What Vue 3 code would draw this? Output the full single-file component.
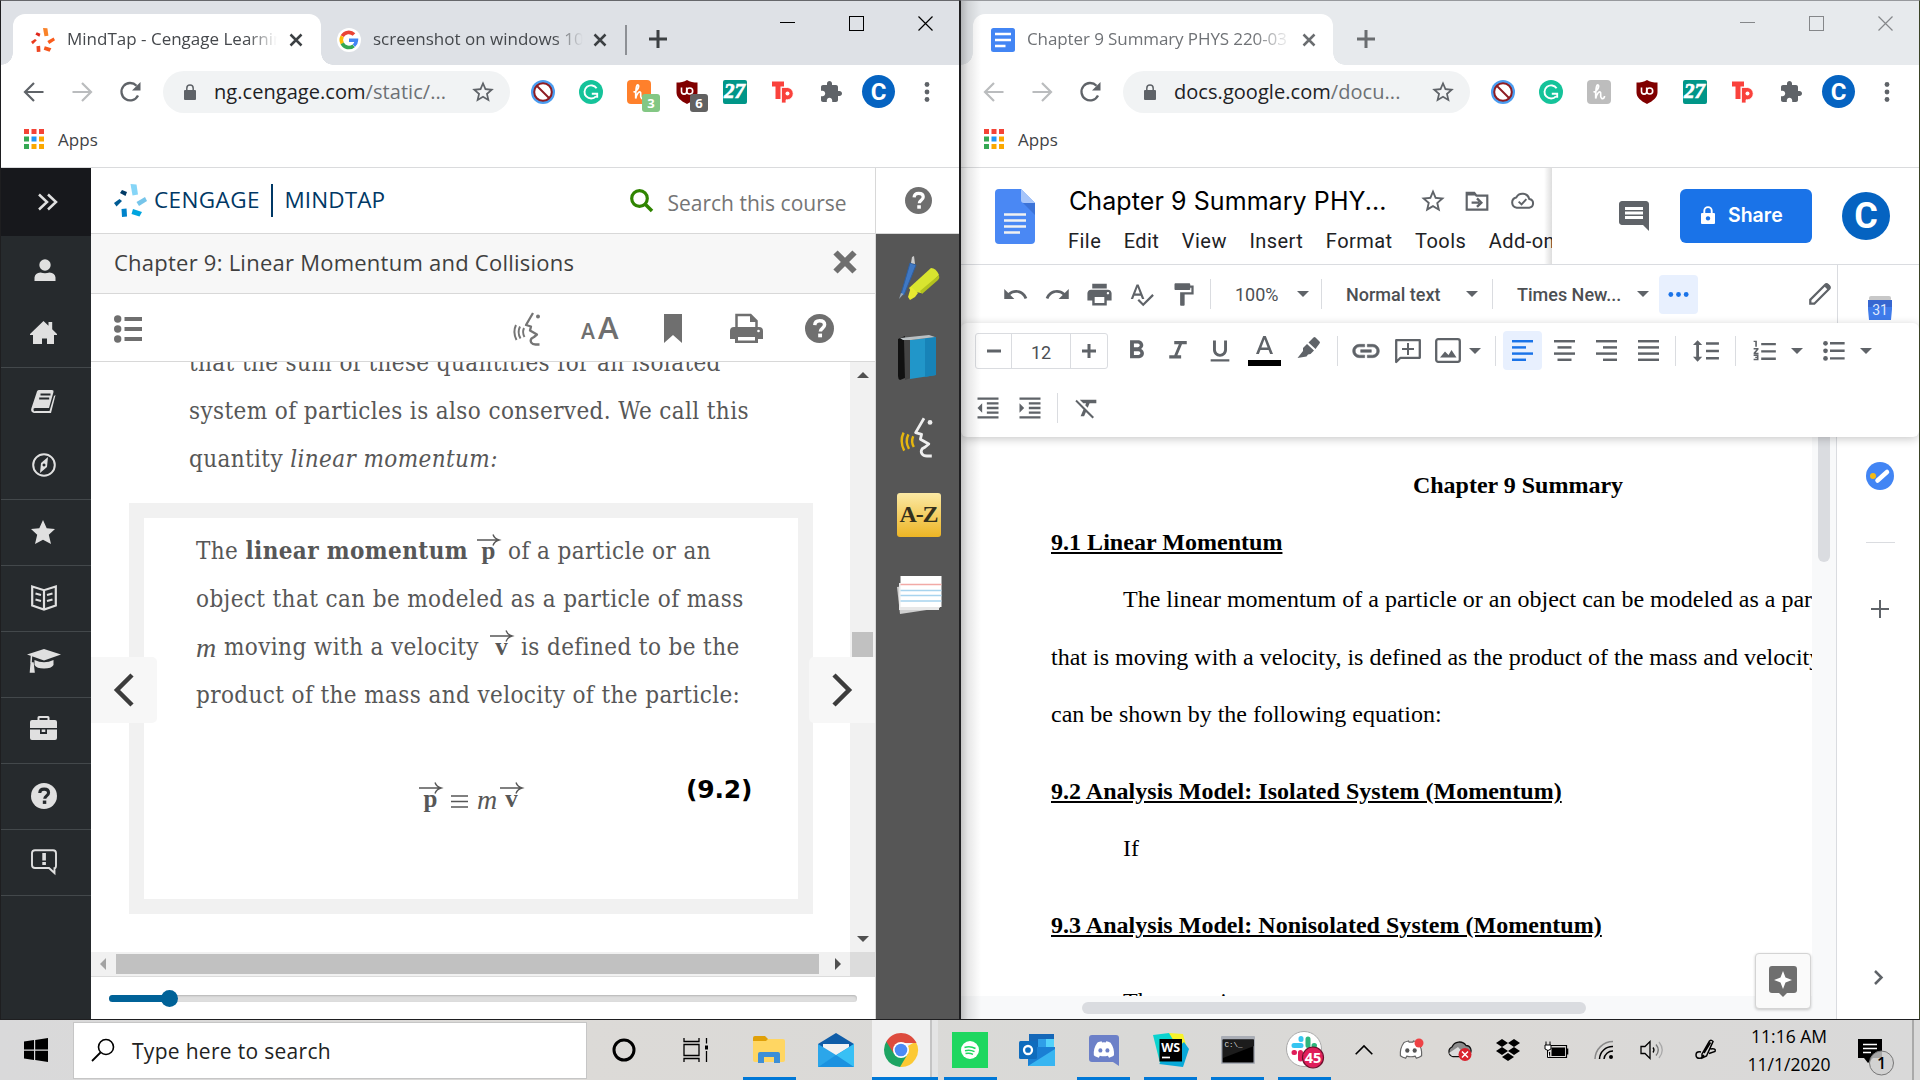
<script setup>
import { h } from 'vue'

const helpGlyph = (fg, bg) =>
  `<circle cx="12" cy="12" r="12" fill="${fg}"/><path d="M8.100 9.200C8.200 6.900 9.700 5.600 12.100 5.600c2.500 0 4.100 1.300 4.100 3.300 0 2.900-3.500 3-3.500 5.600" fill="none" stroke="${bg}" stroke-width="2.900"/><rect x="10.900" y="16.200" width="3.200" height="3.100" fill="${bg}"/>`

const face = (line, wave) =>
  `<path d="M20 1l-7 12 5 1.500-1 4 7 4-3 2.500-2.500 1.500c-2 3 0 6 4 6h4" fill="none" stroke="${line}" stroke-width="2.300" stroke-linejoin="round" /><circle cx="25" cy="4.500" r="2" fill="${line}"/><g fill="none" stroke="${wave}" stroke-width="2"><path d="M3 13q-3.500 7 .5 15"/><path d="M7 14.500q-3 6 .5 12"/><path d="M11 16q-2 4.500.5 9"/></g>`

const rows = (list) => [18, 18, list.map(([x, w], i) => `<rect x="${x}" y="${i * 5.3}" width="${w}" height="2.1"/>`).join('')]

const discord = (c, e) =>
  `<path d="M5 4.500C7 3.500 8.500 3.200 9.500 3l.6 1.200q1.900-.3 3.800 0L14.500 3c1.500.2 3 .6 4.500 1.500 3 4 4 8.500 3.600 13.200-1.700 1.400-3.400 2.100-5.200 2.500l-1.200-2q-4.200 1.100-8.400 0l-1.200 2c-1.800-.4-3.500-1.100-5.200-2.500C1 13 2 8.500 5 4.500z" fill="${c}"/><ellipse cx="8.300" cy="12.500" rx="2.100" ry="2.300" fill="${e}"/><ellipse cx="15.700" cy="12.500" rx="2.100" ry="2.300" fill="${e}"/>`

const burst = (c) =>
  `<path d="M16.500 0l6 .5 1.500 10-5.500 1z" fill="${c[0]}"/><path d="M31 13l2 4-8 5-2.500-4z" fill="${c[1]}"/><path d="M19 25l9 3-2.500 4.500-8-2.500z" fill="${c[2]}"/><path d="M7.500 25l5-.5.5 8-5 .5z" fill="${c[3]}"/><path d="M0 19l5.500-4 2.500 2-5.500 5.500z" fill="${c[4]}"/><path d="M6 9l2-3 5 2-1.500 4z" fill="${c[5]}"/>`

const icons = {
  mindtap: [33, 33, burst(['#f98229', '#fa5c1c', '#f5571d', '#ee4723', '#ea3a1c', '#e0261c'])],
  cengage: [33, 33, burst(['#86d5f7', '#76c5ea', '#00a5df', '#0083ca', '#005b94', '#003a66'])],
  google: [24, 24, '<circle cx="12" cy="12" r="12" fill="#fff"/><g fill="none" stroke-width="3.600"><path d="M5.200 8.200A7.400 7.400 0 0 1 17 6.600" stroke="#ea4335"/><path d="M5.300 15.500a7.400 7.400 0 0 1-.1-7.200" stroke="#fbbc05"/><path d="M16.600 17.800A7.400 7.400 0 0 1 5.200 15.400" stroke="#34a853"/><path d="M12 12.200h7.400a7.400 7.400 0 0 1-2.600 5.400" stroke="#4285f4"/></g>'],
  gdoc: [24, 24, '<rect width="24" height="24" rx="2.500" fill="#4285f4"/><path d="M4 6h16M4 12h16M4 18h10.500" stroke="#fff" stroke-width="2.600"/>'],
  x: [14, 14, '<path d="M1.500 1.500l11 11M12.500 1.500l-11 11" stroke="currentColor" stroke-width="2.500"/>'],
  plus: [18, 18, '<path d="M9 0v18M0 9h18" stroke="currentColor" stroke-width="3"/>'],
  winmin: [15, 15, '<path d="M0 6.500h15" stroke="currentColor"/>'],
  winmax: [15, 15, '<rect x=".5" y=".5" width="14" height="14" fill="none" stroke="currentColor"/>'],
  winclose: [15, 15, '<path d="M.5.5l14 14M14.500.5l-14 14" stroke="currentColor" stroke-width="1.200"/>'],
  back: [24, 24, '<path d="M21.500 12H4M12 3L3 12l9 9" fill="none" stroke="currentColor" stroke-width="2.200"/>'],
  forward: [24, 24, '<path d="M2.500 12h17.500M12 3l9 9-9 9" fill="none" stroke="currentColor" stroke-width="2.200"/>'],
  reload: [24, 24, '<path d="M20 15.500A8.700 8.700 0 1 1 18.500 5.700" fill="none" stroke="currentColor" stroke-width="2.300"/><path d="M22.500 2v8.500H14z"/>'],
  lock: [12, 16, '<rect y="6" width="12" height="10" rx="1"/><path d="M2.800 7V4.200a3.200 3.200 0 0 1 6.400 0V7" fill="none" stroke="currentColor" stroke-width="1.500"/>'],
  star: [24, 24, '<path d="M22 9.240l-7.190-.62L12 2 9.190 8.630 2 9.240l5.460 4.730L5.820 21 12 17.270 18.180 21l-1.630-7.030L22 9.240zM12 15.400l-3.760 2.270 1-4.280-3.320-2.880 4.380-.38L12 6.100l1.710 4.040 4.380.38-3.320 2.880 1 4.280L12 15.400z"/>'],
  block: [24, 24, '<circle cx="12" cy="12" r="12" fill="#4a9df0"/><circle cx="12" cy="12" r="8.800" fill="#fff" stroke="#8e1c22" stroke-width="2"/><path d="M6 6l12 12" stroke="#8e1c22" stroke-width="2"/>'],
  grammarly: [24, 24, '<circle cx="12" cy="12" r="12" fill="#15c39a"/><path d="M17.600 8.300A6.600 6.600 0 1 0 17 16.400M12.800 13.700h5.400v4" fill="none" stroke="#fff" stroke-width="1.900"/>'],
  honey: [24, 24, '<rect width="24" height="24" rx="4" fill="currentColor"/><path d="M6.500 12c4.500-1 6-6 4.500-7s-2.500 5-2.300 13.500c1-4.500 3-7 4.500-6.500s-.7 5 1.300 6.200 3-.7 3-2.200" fill="none" stroke="#fff" stroke-width="1.700"/>'],
  shield: [24, 24, '<path d="M12 0c3 2 6.500 2.500 10.500 2.500v10c0 5-4.500 8.500-10.500 11.500C6 21 1.500 17.500 1.500 12.500v-10C5.500 2.500 9 2 12 0z" fill="#800000"/><path d="M6.500 7.500v4a2.600 2.600 0 0 0 5.200 0V7.500" fill="none" stroke="#fff" stroke-width="1.600"/><circle cx="14.700" cy="11" r="3" fill="none" stroke="#fff" stroke-width="1.600"/>'],
  t27: [24, 24, '<rect width="24" height="24" rx="2" fill="#009688"/><text x="11.500" y="17.500" text-anchor="middle" font-family="Liberation Serif" font-weight="700" font-style="italic" font-size="21" stroke="#fff" stroke-width=".7" fill="#fff">27</text>'],
  tp: [24, 24, '<path d="M1 1.500h12v5H9.500V19h-5V6.500H1z" fill="#fa423c"/><path d="M10.500 7.500h6.300a6.200 6.200 0 0 1 0 12.300H15V23h-4.500z" fill="#fa423c" stroke="#fff" stroke-width=".8"/><circle cx="16.500" cy="13.500" r="2" fill="#fff"/>'],
  puzzle: [24, 24, '<path d="M20.500 11H19V7c0-1.100-.9-2-2-2h-4V3.500C13 2.120 11.880 1 10.500 1S8 2.120 8 3.500V5H4c-1.100 0-1.990.9-1.990 2v3.800H3.500c1.490 0 2.700 1.210 2.700 2.700s-1.210 2.700-2.700 2.700H2V20c0 1.100.9 2 2 2h3.800v-1.500c0-1.490 1.210-2.700 2.700-2.700 1.490 0 2.700 1.210 2.700 2.700V22H17c1.100 0 2-.9 2-2v-4h1.500c1.380 0 2.500-1.120 2.500-2.500S21.880 11 20.500 11z"/>'],
  dots: [24, 24, '<circle cx="12" cy="4.500" r="2.400"/><circle cx="12" cy="12" r="2.400"/><circle cx="12" cy="19.500" r="2.400"/>'],
  apps: [20, 20, '<path fill="#f44336" d="M0 0h5v5H0zM7.500 0h5v5h-5zM15 0h5v5h-5z"/><path fill="#34a853" d="M0 7.500h5v5H0zM0 15h5v5H0z"/><path fill="#2196f3" d="M7.500 7.500h5v5h-5z"/><path fill="#fba800" d="M15 7.500h5v5h-5zM7.500 15h5v5h-5zM15 15h5v5h-5z"/>'],
  chevrons: [22, 18, '<path d="M2 1.500L10 9l-8 7.500M11 1.500L19 9l-8 7.500" fill="none" stroke="currentColor" stroke-width="2.500"/>'],
  user: [22, 22, '<circle cx="11" cy="6" r="5.700"/><path d="M.5 22v-3.500Q1 14 6.500 13.500q4.500 1.500 9 0Q21 14 21.500 18.500V22z"/>'],
  home: [27, 23, '<path d="M13.500 0l5 4.800V1h3.700v7.300L27 13v1h-3v9h-7v-5.500h-5V23H3v-9H0v-1z"/>'],
  book: [26, 24, '<path d="M8 0h13q2 0 1.500 2L18 18H4q-2 0-1.500 2t2 1h14L23 6l1.500-1L20 23H3q-4-1-2.500-5L5.500 3Q6 0 8 0z"/><path d="M9.500 4.500h10M8.200 8.500h10" stroke="#262a2d" stroke-width="1.800"/>'],
  compass: [24, 24, '<circle cx="12" cy="12" r="10.800" fill="none" stroke="currentColor" stroke-width="2"/><path fill-rule="evenodd" d="M16 4l-1 10-7 6 1-10zM12 10.500a1.500 1.500 0 1 0 .01 0z"/>'],
  starfull: [24, 24, '<path d="M12 0l3.700 8.200 8.300.8-6.200 5.700L20 24l-8-4.200L4 24l2.200-9.300L0 9l8.300-.8z"/>'],
  openbook: [26, 26, '<path d="M1.200 1.500L13 5.200l11.800-3.700v19L13 24.500 1.200 20.500zM13 5v19" fill="none" stroke="currentColor" stroke-width="2.200"/><path d="M4.500 8.500L10 10M4.500 14.500L10 16M21.500 8.500L16 10M21.500 14.500L16 16" stroke="currentColor" stroke-width="2"/>'],
  cap: [34, 24, '<path d="M17 0l17 5.500L17 11.500 0 5.500z"/><path d="M7.500 11q9.500 4.500 19 0v5q-2 3.500-9.500 3.500T7.500 16z"/><path d="M4.500 6.500L4 14M4.200 14L3.500 23h3.500L6 14z" stroke="currentColor" stroke-width="1.500"/>'],
  case: [27, 24, '<path fill-rule="evenodd" d="M7.500 4V1.500Q7.500 0 9 0h9q1.500 0 1.500 1.500V4H25q2 0 2 2v6H0V6q0-2 2-2zm2 0h8V2h-8z"/><path d="M0 13.500h10V18h7v-4.500h10V22q0 2-2 2H2q-2 0-2-2z"/><rect x="11.700" y="13.500" width="3.600" height="2.500"/>'],
  help: [24, 24, helpGlyph('currentColor', '#262a2d')],
  helpw: [24, 24, helpGlyph('currentColor', '#fff')],
  feedback: [26, 26, '<path d="M4 1.200h18q3 0 3 3v12q0 3-1.500 3V24l-5.500-5H4q-3 0-3-3V4q0-2.800 3-2.800z" fill="none" stroke="currentColor" stroke-width="1.900"/><path d="M11.300 4h3.600v7.500h-3.600zM11.300 13h3.600v3h-3.600z"/>'],
  search: [23, 23, '<circle cx="9.500" cy="9.500" r="7.800" fill="none" stroke="currentColor" stroke-width="3.200"/><path d="M15 15l7 7" stroke="currentColor" stroke-width="3.600"/>'],
  bigx: [24, 24, '<path d="M2.500 2.500l19 19M21.500 2.500l-19 19" stroke="currentColor" stroke-width="6"/>'],
  toc: [28, 28, '<circle cx="3.700" cy="4" r="3.700"/><circle cx="3.700" cy="14" r="3.700"/><circle cx="3.700" cy="24" r="3.700"/><path d="M10.500 2h17.500v4H10.500zM10.500 12h17.500v4H10.500zM10.500 22h17.500v4H10.500z"/>'],
  speak: [30, 34, face('#757575', '#757575')],
  speaky: [30, 34, face('#eee', '#e6b70f')],
  bookmark: [18, 29, '<path d="M0 0h18v29l-9-8-9 8z"/>'],
  printer: [33, 29, '<path d="M6.500 14V1h14l6 6v7" fill="none" stroke="currentColor" stroke-width="2.500"/><path d="M20 0v8h7z"/><path fill-rule="evenodd" d="M4 13h25q4 0 4 4v8h-5v4H5v-4H0v-8q0-4 4-4zm4 10v3.500h17V23z"/><circle cx="28.500" cy="17" r="1.300" fill="#fff"/>'],
  prev: [20, 34, '<path d="M18 2L3 17l15 15" fill="none" stroke="currentColor" stroke-width="4.500"/>'],
  next: [20, 34, '<path d="M2 2l15 15L2 32" fill="none" stroke="currentColor" stroke-width="4.500"/>'],
  vec: [23, 12, '<path d="M0 6h21.500M16 .5q1.500 4.300 6 5.500-4.500 1.200-6 5.500" fill="none" stroke="currentColor" stroke-width="1.400"/>'],
  equiv: [17, 13, '<path d="M0 1h17M0 6.500h17M0 12h17" stroke="currentColor" stroke-width="1.500"/>'],
  pens: [44, 44, '<path d="M13 7l6 2L7 39l-3-1z" fill="#3f78c4" stroke="#2f5f9f"/><path d="M15 1l2-1 1 8-4-1z" fill="#ccc"/><path d="M2 43l2-6 2.500 1z" fill="#9ab"/><path d="M34 12q5 0 8 7L24 37l-10-2-2-3z" fill="#d9e52f"/><path d="M42 19q1 3-1 5L25 38l-2-3z" fill="#b3c21e"/><path d="M14 31l7 6-3 4-5 3-2-3z" fill="#e9e930"/>'],
  bluebook: [42, 46, '<path d="M1 4l7-3v42l-5 2q-2-1-2-4z" fill="#111"/><path d="M7 5h7v38l-6 2z" fill="#444"/><path d="M13 5l26-3v38l-26 4z" fill="#2196c9"/><path d="M28 3l11-1v38l-11 2z" fill="#1783b8"/><path d="M3 3L32 0l6 2-24 3H6z" fill="#b9bfc2"/>'],
  az: [46, 46, '<defs><linearGradient id="gold" x2="0" y2="1"><stop stop-color="#fbe9a4"/><stop offset="1" stop-color="#edb525"/></linearGradient></defs><rect x="1" y="1" width="44" height="44" rx="3" fill="url(#gold)"/><text x="23" y="30" text-anchor="middle" font-family="Liberation Serif" font-weight="700" font-size="24" textLength="39" fill="#33301c">A-Z</text>'],
  cards: [46, 40, '<path d="M1 12l40-6 3 27-40 6z" fill="#cfcfcf"/><path d="M3 8h40v27H3z" fill="#e8e8e8"/><rect x="4.500" y="1" width="41" height="31" fill="#fff"/><path d="M4.500 9.500h41" stroke="#f2aaa6" stroke-width="1.600"/><path d="M4.500 15.500h41M4.500 20.500h41M4.500 26h41" stroke="#a8d4ee" stroke-width="1.600"/>'],
  doclogo: [40, 55, '<path d="M4 0h22l14 14v37q0 4-4 4H4q-4 0-4-4V4q0-4 4-4z" fill="#4a88f4"/><path d="M26 0l14 14H29q-3 0-3-3z" fill="#a6c5fa"/><path d="M28 14h12v12z" fill="#3b73d8"/><path d="M9 25.500h22M9 31.500h22M9 37.500h22M9 43.500h16" stroke="#f1f1f1" stroke-width="2.700"/>'],
  folder: [24, 24, '<path d="M2.500 4.500h7l2 2.500h10v13h-19z" fill="none" stroke="currentColor" stroke-width="2"/><path d="M2 4h7l2 3H2z"/><path d="M7 13.500h7M12 9.500l4 4-4 4" fill="none" stroke="currentColor" stroke-width="2.200"/>'],
  cloud: [26, 20, '<path d="M7 17.500a5.500 5.500 0 0 1-.5-10.800 7.300 7.300 0 0 1 13.500 1.500 4.700 4.700 0 0 1 0 9.300z" fill="none" stroke="currentColor" stroke-width="2.100"/><path d="M9 11l3 3 5-5.500" fill="none" stroke="currentColor" stroke-width="2"/>'],
  comment: [24, 24, '<path d="M21.990 4c0-1.100-.89-2-1.990-2H4c-1.100 0-2 .9-2 2v12c0 1.100.9 2 2 2h14l4 4-.01-18zM18 14H6v-2h12v2zm0-3H6V9h12v2zm0-3H6V6h12v2z"/>'],
  sharelock: [16, 18, '<path fill-rule="evenodd" d="M2 7h12q1 0 1 1v9q0 1-1 1H2q-1 0-1-1V8q0-1 1-1zm6 3.200a2.200 2.200 0 1 0 .01 0z"/><path d="M4.300 7V4.800a3.700 3.700 0 0 1 7.400 0V7" fill="none" stroke="currentColor" stroke-width="1.900"/>'],
  undo: [24, 24, '<path d="M12.500 8c-2.650 0-5.050.99-6.900 2.600L2 7v9h9l-3.620-3.620c1.390-1.160 3.160-1.880 5.120-1.880 3.540 0 6.550 2.310 7.600 5.500l2.370-.78C21.080 11.030 17.150 8 12.500 8z"/>'],
  redo: [24, 24, '<path d="M18.400 10.600C16.550 8.990 14.150 8 11.500 8c-4.650 0-8.580 3.030-9.960 7.220L3.900 16c1.050-3.190 4.050-5.500 7.600-5.500 1.950 0 3.730.72 5.120 1.880L13 16h9V7l-3.600 3.600z"/>'],
  print: [24, 24, '<path d="M19 8H5c-1.660 0-3 1.340-3 3v6h4v4h12v-4h4v-6c0-1.660-1.340-3-3-3zm-3 11H8v-5h8v5zm3-7c-.55 0-1-.45-1-1s.45-1 1-1 1 .45 1 1-.45 1-1 1zm-1-9H6v4h12V3z"/>'],
  spell: [24, 24, '<path d="M12.450 16h2.090L9.430 3H7.570L2.460 16h2.090l1.120-3h5.640l1.140 3zm-6.020-5L8.500 5.480 10.570 11H6.430zm15.160.59l-8.090 8.090L9.830 16l-1.410 1.410 5.090 5.090L23 13l-1.410-1.410z"/>'],
  paint: [24, 24, '<path d="M18 4V3c0-.55-.45-1-1-1H5c-.55 0-1 .45-1 1v4c0 .55.450 1 1 1h12c.55 0 1-.45 1-1V6h1v4H9v11c0 .55.450 1 1 1h2c.55 0 1-.45 1-1v-9h8V4h-3z"/>'],
  caret: [12, 6, '<path d="M0 0h12L6 6z"/>'],
  more: [24, 24, '<circle cx="4" cy="12" r="2.500"/><circle cx="12" cy="12" r="2.500"/><circle cx="20" cy="12" r="2.500"/>'],
  pencil: [24, 24, '<path d="M2.300 21.700v-4L17 3q1.500-1.500 3 0l1 1q1.500 1.500 0 3L6.300 21.700z" fill="none" stroke="currentColor" stroke-width="2.300"/><path d="M16 4l4-2 2 2-2 4z"/>'],
  minus: [14, 14, '<path d="M0 7h14" stroke="currentColor" stroke-width="3"/>'],
  add: [14, 14, '<path d="M0 7h14M7 0v14" stroke="currentColor" stroke-width="3"/>'],
  bold: [24, 24, '<path d="M15.600 10.790c.97-.67 1.650-1.770 1.650-2.790 0-2.260-1.750-4-4-4H7v14h7.040c2.090 0 3.710-1.700 3.710-3.790 0-1.520-.86-2.820-2.150-3.420zM10 6.500h3c.83 0 1.500.67 1.500 1.500s-.67 1.500-1.500 1.500h-3v-3zm3.500 9H10v-3h3.500c.83 0 1.500.67 1.500 1.500s-.67 1.500-1.500 1.500z"/>'],
  italic: [24, 24, '<path d="M9 4v2.600h3.700L9 15.400H5V18h9.500v-2.600h-3L15.200 6.600H19V4z"/>'],
  underline: [24, 24, '<path d="M12 17c3.310 0 6-2.690 6-6V3h-2.500v8c0 1.930-1.570 3.500-3.500 3.500S8.500 12.930 8.500 11V3H6v8c0 3.310 2.690 6 6 6zm-8 2v2h16v-2H4z"/>'],
  color: [33, 30, '<path d="M15.200 0L8 18h2.900l1.500-4h8.200l1.500 4H25L17.800 0zm-1.800 11.500L16.500 3.300l3.100 8.200z"/><rect y="24" width="33" height="6" fill="#000"/>'],
  marker: [24, 24, '<path d="M16.500 1.500q1-1 2 0l4 4q1 1 0 2L18.500 13l-7-6.500zM10 8l7 6.500-3.500 3.500-2.500.5-1.500 2-9 1.500L6 15v-3z"/>'],
  link: [24, 24, '<path d="M3.900 12c0-1.710 1.390-3.100 3.100-3.100h4V7H7c-2.760 0-5 2.240-5 5s2.240 5 5 5h4v-1.900H7c-1.710 0-3.100-1.390-3.100-3.100zM8 13h8v-2H8v2zm9-6h-4v1.900h4c1.710 0 3.100 1.390 3.100 3.100s-1.390 3.100-3.100 3.100h-4V17h4c2.760 0 5-2.240 5-5s-2.240-5-5-5z" stroke="currentColor" stroke-width=".4"/>'],
  addcomment: [26, 26, '<path d="M1.200 24V2.200h23.600v17.600H5.500z" fill="none" stroke="currentColor" stroke-width="2.300" stroke-linejoin="round"/><path d="M13 5v12M7 11h12" stroke="currentColor" stroke-width="2"/>'],
  image: [26, 26, '<rect x="1.200" y="1.200" width="23.600" height="22.600" rx="2" fill="none" stroke="currentColor" stroke-width="2.300"/><path d="M5 19.500l5-6 3.500 3.500 3-5 5 7.500z"/>'],
  left: rows([[0, 18], [0, 12], [0, 18], [0, 12]]),
  center: rows([[0, 18], [3, 12], [0, 18], [3, 12]]),
  right: rows([[0, 18], [6, 12], [0, 18], [6, 12]]),
  justify: rows([[0, 18], [0, 18], [0, 18], [0, 18]]),
  decrease: [24, 24, '<path d="M11 17h10v-2H11v2zm-8-5l4 4V8l-4 4zm0 9h18v-2H3v2zM3 3v2h18V3H3zm8 6h10V7H11v2zm0 4h10v-2H11v2z"/>'],
  increase: [24, 24, '<path d="M3 21h18v-2H3v2zM3 8v8l4-4-4-4zm8 9h10v-2H11v2zM3 3v2h18V3H3zm8 6h10V7H11v2zm0 4h10v-2H11v2z"/>'],
  spacing: [26, 24, '<path d="M6.500 6.500h3L5.200 2 .9 6.500h3v11h-3L5.200 22l4.300-4.500h-3zM13 4v2.300h12V4zM13 17.700V20h12v-2.300zM13 10.900v2.300h12v-2.300z"/>'],
  numbered: [24, 24, '<path d="M1.500 16.500h3v.7H3v1.200h1.500v.8h-3v1.300H6v-5.500H1.500zM3 8h1.500V2.500h-3v1.300H3zM1.500 10.500h2.600L1.500 13.600v1.200H6v-1.300H3.500L6 10.500V9.200H1.500z"/><path d="M8.500 4.500h13.500v2.200H8.500zM8.500 18h13.500v2.200H8.500zM8.500 11.200h13.500v2.200H8.500z"/>'],
  bullets: [24, 24, '<circle cx="4" cy="5.600" r="2.100"/><circle cx="4" cy="12.300" r="2.100"/><circle cx="4" cy="19" r="2.100"/><path d="M8 4.500h13v2.200H8zM8 11.200h13v2.200H8zM8 17.900h13v2.200H8z"/>'],
  clear: [24, 24, '<path d="M3.270 5L2 6.270l6.970 6.970L6.500 19h3l1.570-3.660L16.730 21 18 19.730 3.550 5.270 3.270 5zM6 5v.18L8.820 8h2.400l-.72 1.680 2.100 2.100L14.210 8H20V5H6z"/>'],
  calendar: [24, 24, '<rect x="1" width="22" height="5" rx="2" fill="#c8c8c8"/><path d="M0 4h24v9l-1 11H1L0 13z" fill="#3f7bea"/><path d="M0 4h24v7H0z" fill="#3766d0"/><text x="12" y="19" text-anchor="middle" font-family="Roboto" font-size="14" fill="#dfe9fc">31</text>'],
  tasks: [28, 28, '<circle cx="14" cy="14" r="14" fill="#4285f4"/><circle cx="7" cy="14" r="3" fill="#f5ba15"/><path d="M11.500 18.500L21 10" stroke="#fff" stroke-width="4.500" stroke-linecap="round"/>'],
  thinplus: [18, 18, '<path d="M9 0v18M0 9h18" stroke="currentColor" stroke-width="2"/>'],
  chev: [9, 15, '<path d="M1 1l6.500 6.500L1 14" fill="none" stroke="currentColor" stroke-width="2.500"/>'],
  explore: [28, 31, '<path d="M3 0h22q3 0 3 3v21q0 3-3 3h-7l-4 4-4-4H3q-3 0-3-3V3q0-3 3-3z"/><path d="M14 5l2.500 6.500L23 14l-6.500 2.500L14 23l-2.500-6.500L5 14l6.500-2.500z" fill="#fff"/>'],
  windows: [24, 24, '<path d="M0 3.500l10-1.400v9.400H0zM11.200 2L24 0v11.500H11.200zM0 12.700h10V22L0 20.500zM11.200 12.700H24V24l-12.800-1.900z"/>'],
  find: [24, 24, '<circle cx="15" cy="9" r="7.500" fill="none" stroke="currentColor" stroke-width="1.600"/><path d="M9.500 14.500L1 23" stroke="currentColor" stroke-width="1.800"/>'],
  cortana: [24, 24, '<circle cx="12" cy="12" r="10" fill="none" stroke="#000" stroke-width="3"/>'],
  taskview: [26, 24, '<path d="M1 0v3.500h15V0M1 24v-3.500h15V24M1 6.500h15v11H1zM23.500 0v5.500M23.500 13v11" fill="none" stroke="#000" stroke-width="1.300"/><path d="M22 7.500h3v4h-3z"/>'],
  explorer: [32, 28, '<path d="M0 2q0-2 2-2h10l3 3v4H0z" fill="#e0a008"/><path d="M0 5h13l2-2h15q2 0 2 2v19q0 2-2 2H2q-2 0-2-2z" fill="#ffd662"/><path d="M5 27V18q0-2 2-2h18q2 0 2 2v9h-6v-6H11v6z" fill="#3d8fd6"/>'],
  mail: [36, 34, '<path d="M0 11L18 0l18 11v3H0z" fill="#0f5da8"/><path d="M5 11h26v12H5z" fill="#f2f2f2"/><path d="M0 11l18 11L36 11v23H0z" fill="#2ba6ea"/><path d="M0 34L36 11v23z" fill="#38c0f5"/><path d="M0 34l18-12 18 12z" fill="#1b92e0"/>'],
  chrome: [34, 34, '<path d="M17 17l14.700-8.500A17 17 0 0 1 16 34z" fill="#fcc934"/><path d="M2.300 8.500A17 17 0 0 0 16 34l8-13.500L17 17z" fill="#1da462"/><path d="M2.300 8.500A17 17 0 0 1 31.700 8.500L32.500 10H17l-7.500 10z" fill="#dd4b3e"/><circle cx="17" cy="17" r="8" fill="#fff"/><circle cx="17" cy="17" r="6.300" fill="#4c8bf5"/>'],
  spotify: [36, 36, '<rect width="36" height="36" fill="#1ed760"/><circle cx="18" cy="18" r="9" fill="#fff"/><path d="M12.500 15.500q5.500-2 11 1M13 18.700q5-1.500 9.500 1M13.500 21.500q4-1 7.500.8" fill="none" stroke="#1ed760" stroke-width="1.500"/>'],
  outlook: [36, 34, '<path d="M10 1h25v14H10z" fill="#1568b8"/><path d="M19 6h8v9h-8z" fill="#2f9fe8"/><path d="M27 6h8v9h-8z" fill="#53d2fb"/><path d="M9 14h27v19H9z" fill="#1a7fd4"/><path d="M9 33l27-17v17z" fill="#38b5f1"/><rect y="8" width="18" height="18" rx="1.500" fill="#0f6cbd"/><circle cx="9" cy="17" r="4" fill="none" stroke="#fff" stroke-width="2.300"/>'],
  discord: [30, 31, '<path d="M3 0h24q3 0 3 3v28l-6-4H3q-3 0-3-3V3q0-3 3-3z" fill="#6c80c8"/><g transform="translate(3.500 3.500) scale(.95)">' + discord('#fff', '#6c80c8') + '</g>'],
  webstorm: [36, 36, '<path d="M0 3l16-2 9 5 7 8-3 20-22-3z" fill="#0bd3cf"/><path d="M16 1l14 1 3 11-8 3z" fill="#f8f32b"/><path d="M31 10l5 7-6 18-24-3z" fill="#08a9d8"/><rect x="6.500" y="7" width="22.500" height="22.500" fill="#000"/><text x="17.700" y="19.500" text-anchor="middle" font-family="Open Sans" font-weight="700" font-size="12.500" fill="#fff">WS</text><path d="M9 25.500h8" stroke="#fff" stroke-width="1.700"/>'],
  cmd: [34, 28, '<rect width="34" height="28" rx="1" fill="#a9adb5"/><rect x="1.500" y="3.500" width="31" height="23" fill="#000"/><path d="M2 22L33 10v-6.500H2z" fill="#1c1c1c"/><text x="3.500" y="11" font-family="Liberation Mono" font-size="7.500" fill="#ddd">C:\\_</text>'],
  slack: [38, 38, '<circle cx="18" cy="18" r="17.500" fill="#fff" stroke="#aaa"/><g stroke-width="5" stroke-linecap="round"><path d="M8 14.500h7M15 7.500v1" stroke="#36c5f0"/><path d="M22 8v6.500M28.500 14.500h-.5" stroke="#2eb67d"/><path d="M14.500 21.500V28M8 21.500h.5" stroke="#e01e5a"/></g><circle cx="27" cy="26.500" r="10.500" fill="#e01e5a" stroke="#6d0f2c" stroke-width="1.200"/><text x="27" y="31.500" text-anchor="middle" font-family="Open Sans" font-weight="700" font-size="14.500" fill="#fff">45</text>'],
  up: [18, 10, '<path d="M.7 9.300L9 1l8.300 8.300" fill="none" stroke="#000" stroke-width="1.600"/>'],
  traydiscord: [26, 24, discord('#fff', '#555').replace('/>', ' stroke="#666" stroke-width="1.200"/>') + '<circle cx="20" cy="5" r="4.500" fill="#ee4245"/>'],
  onedrive: [26, 22, '<path d="M6 17.500A5 5 0 0 1 5 8 8 8 0 0 1 19 6.500a5 5 0 0 1 3 9v2z" fill="#8b8b8b" stroke="#111" stroke-width="1.300"/><path d="M2 14l9-6 8 9H5z" fill="#ddd"/><circle cx="18" cy="15.500" r="6.500" fill="#d9232e"/><path d="M15 12.500l6 6M21 12.500l-6 6" stroke="#fff" stroke-width="1.500"/>'],
  dropbox: [24, 22, '<path d="M6 0l6 4-6 4-6-4zM18 0l6 4-6 4-6-4zM6 8l6 4-6 4-6-4zM18 8l6 4-6 4-6-4zM12 14l6 4-6 4-6-4z"/>'],
  battery: [24, 18, '<path d="M6 4.500h16.500v12H5.500V11M22.500 8h1.200v5h-1.200" fill="none" stroke="#000" stroke-width="1.200"/><rect x="7.500" y="6.500" width="13.500" height="8.500"/><path d="M1 4h6v4q-3 3-6 0zM2 .5V4M6 .5V4M3.500 9v7.500H6" fill="#fff" stroke="#000"/>'],
  wifi: [20, 20, '<g fill="none" stroke="#000" stroke-width="1.500"><path d="M1 19A18 18 0 0 1 19 1.500" stroke="#888"/><path d="M5.500 19A13 13 0 0 1 19 6.500"/><path d="M10 19a9 9 0 0 1 9-8"/></g><circle cx="17" cy="17" r="2"/>'],
  volume: [24, 20, '<path d="M1 6.500h4L10 1.500v17l-5-5H1z" fill="none" stroke="#000" stroke-width="1.300"/><g fill="none" stroke-width="1.300"><path d="M13 7.500q2 2.500 0 5" stroke="#000"/><path d="M16 4.500q4.500 5.500 0 11" stroke="#777"/><path d="M19 2q6.500 8 0 16" stroke="#aaa"/></g>'],
  inkpen: [22, 22, '<path d="M6 13q-5-1-5 3t5 3l3-3M7 15L14.500 2q2-1.500 3.500.5L11.500 17l-4.500 2zM9 14L15.500 3.500M15.500 10q6-1 4.500 2.500l-6 2" fill="none" stroke="#000" stroke-width="1.500"/>'],
  notice: [38, 38, '<path d="M0 0h24v19h-9l-5 5-4-5H0z"/><path d="M5 5.500h14M5 9.500h14M5 13.500h8" stroke="#fff" stroke-width="1.300"/><circle cx="23.500" cy="24" r="12" fill="#cfcfcfcc" stroke="#777"/><text x="23.500" y="30" text-anchor="middle" font-family="Open Sans" font-size="16" fill="#000" font-weight="600">1</text>'],
}

const Ico = ({ n, w }) => {
  const [vw, vh, body] = icons[n]
  const width = w || vw
  return h('svg', { viewBox: `0 0 ${vw} ${vh}`, width, height: (width * vh) / vw, fill: 'currentColor', innerHTML: body, style: { display: 'block', flexShrink: 0, overflow: 'visible' } })
}
Ico.props = ['n', 'w']

const windows = [
  {
    id: 'mindtap', host: 'ng.cengage.com', path: '/static/...', canBack: true,
    tabs: [
      { icon: 'mindtap', title: 'MindTap - Cengage Learning', active: true },
      { icon: 'google', title: 'screenshot on windows 10 -' },
    ],
    honey: '3', shield: '6',
  },
  {
    id: 'docs', host: 'docs.google.com', path: '/docu...', canBack: false,
    tabs: [{ icon: 'gdoc', title: 'Chapter 9 Summary PHYS 220-03', active: true }],
  },
]
const navGroups = [['user', 'home'], ['book', 'compass'], ['starfull'], ['openbook'], ['cap'], ['case'], ['help'], ['feedback']]
const navSize = { help: 26 }
const menus = ['File', 'Edit', 'View', 'Insert', 'Format', 'Tools', 'Add-ons']
const apps = [
  { n: 'explorer', run: true }, { n: 'mail' }, { n: 'chrome', run: true, focus: true }, { n: 'spotify', run: true },
  { n: 'outlook' }, { n: 'discord', run: true }, { n: 'webstorm', run: true }, { n: 'cmd', run: true }, { n: 'slack', run: true },
]
const tray = ['up', 'traydiscord', 'onedrive', 'dropbox', 'battery', 'wifi', 'volume', 'inkpen']
</script>

<template>
  <div class="desktop">
    <div class="windows">
      <section v-for="w in windows" :key="w.id" class="window" :class="w.id">
        <div class="tabstrip">
          <div v-for="t in w.tabs" :key="t.title" class="tab" :class="{ active: t.active }">
            <Ico :n="t.icon" :w="24" />
            <span class="tab-title">{{ t.title }}</span>
            <Ico n="x" class="tab-x" />
          </div>
          <i v-if="w.tabs.length > 1" class="tab-sep"></i>
          <Ico n="plus" class="new-tab" />
          <div class="controls"><Ico n="winmin" /><Ico n="winmax" /><Ico n="winclose" /></div>
        </div>
        <div class="toolbar">
          <Ico n="back" :class="{ dim: !w.canBack }" />
          <Ico n="forward" class="dim" />
          <Ico n="reload" />
          <div class="omnibox">
            <Ico n="lock" />
            <span class="url"><b>{{ w.host }}</b>{{ w.path }}</span>
            <Ico n="star" :w="26" />
          </div>
          <div class="extensions">
            <span><Ico n="block" /></span>
            <span><Ico n="grammarly" /></span>
            <span class="honey"><Ico n="honey" /><em v-if="w.honey" class="green">{{ w.honey }}</em></span>
            <span><Ico n="shield" /><em v-if="w.shield">{{ w.shield }}</em></span>
            <span><Ico n="t27" /></span>
            <span><Ico n="tp" /></span>
            <span><Ico n="puzzle" /></span>
            <span><strong class="avatar">C</strong></span>
            <span><Ico n="dots" /></span>
          </div>
        </div>
        <div class="bookmarks"><Ico n="apps" /><span>Apps</span></div>

        <div v-if="w.id === 'mindtap'" class="mt">
          <nav class="rail">
            <div class="rail-toggle"><Ico n="chevrons" /></div>
            <div v-for="(g, i) in navGroups" :key="i" class="rail-group">
              <div v-for="n in g" :key="n" class="rail-item" :class="n"><Ico :n="n" :w="navSize[n]" /></div>
            </div>
          </nav>
          <div class="mt-body">
            <header class="mt-head">
              <Ico n="cengage" />
              <span class="brand">CENGAGE</span><i></i><span class="brand product">MINDTAP</span>
              <Ico n="search" class="green-search" /><span class="search-hint">Search this course</span>
              <div class="head-help"><Ico n="helpw" :w="27" /></div>
            </header>
            <div class="mt-cols">
              <div class="reader">
                <div class="chapter"><span>Chapter 9: Linear Momentum and Collisions</span><Ico n="bigx" /></div>
                <div class="reader-tools">
                  <Ico n="toc" />
                  <Ico n="speak" class="t-speak" />
                  <span class="t-size"><small>A</small>A</span>
                  <Ico n="bookmark" class="t-mark" />
                  <Ico n="printer" class="t-print" />
                  <Ico n="helpw" :w="29" class="t-help" />
                </div>
                <div class="reader-main">
                  <article>
                    <div class="intro">
                      <p>that the sum of these quantities for an isolated</p>
                      <p>system of particles is also conserved. We call this</p>
                      <p>quantity <cite>linear momentum:</cite></p>
                    </div>
                    <div class="definition">
                      <p><span class="d0">The <b>linear momentum</b></span><span class="vec">p<Ico n="vec" /></span><span class="d1">of a particle or an</span></p>
                      <p>object that can be modeled as a particle of mass</p>
                      <p><cite class="m">m</cite><span class="d3">moving with a velocity</span><span class="vec">v<Ico n="vec" /></span><span class="d4">is defined to be the</span></p>
                      <p>product of the mass and velocity of the particle:</p>
                      <div class="equation">
                        <span class="vec">p<Ico n="vec" /></span><Ico n="equiv" class="equiv" /><cite class="m">m</cite><span class="vec">v<Ico n="vec" /></span>
                        <strong>(9.2)</strong>
                      </div>
                    </div>
                  </article>
                  <div class="vscroll"><i class="tri up"></i><div class="vthumb"></div><i class="tri down"></i></div>
                  <div class="pager prev"><Ico n="prev" /></div>
                  <div class="pager next"><Ico n="next" /></div>
                </div>
                <div class="hscroll"><i class="tri lt"></i><div class="hthumb"></div><i class="tri rt"></i><div class="corner"></div></div>
                <div class="progress"><div class="track"><div class="fill"><i></i></div></div></div>
              </div>
              <aside class="apps-rail"><Ico n="pens" /><Ico n="bluebook" /><Ico n="speaky" :w="36" /><Ico n="az" /><Ico n="cards" /></aside>
            </div>
          </div>
        </div>

        <div v-else class="gd">
          <header class="gd-head">
            <Ico n="doclogo" class="logo" />
            <div class="gd-title">
              <div class="title-row"><span class="name">Chapter 9 Summary PHY...</span><Ico n="star" :w="28" /><Ico n="folder" :w="26" /><Ico n="cloud" :w="25" /></div>
              <div class="menus"><span v-for="m in menus" :key="m">{{ m }}</span></div>
            </div>
            <div class="gd-actions">
              <Ico n="comment" :w="36" />
              <button class="share"><Ico n="sharelock" />Share</button>
              <strong class="avatar big">C</strong>
            </div>
          </header>
          <div class="gd-tools">
            <span v-for="n in ['undo', 'redo', 'print', 'spell', 'paint']" :key="n" class="slot"><Ico :n="n" :w="n === 'print' ? 29 : 27" /></span>
            <i class="sep s1"></i>
            <span class="zoom">100%</span><Ico n="caret" />
            <i class="sep s2"></i>
            <span class="style">Normal text</span><Ico n="caret" />
            <i class="sep s3"></i>
            <span class="font">Times New...</span><Ico n="caret" />
            <span class="slot on dots3"><Ico n="more" :w="23" /></span>
            <Ico n="pencil" class="pencil" />
            <div class="side-top"><Ico n="calendar" /></div>
          </div>
          <div class="gd-more">
            <div class="tool-row">
              <div class="size"><span><Ico n="minus" /></span><span class="num">12</span><span><Ico n="add" /></span></div>
              <span class="slot f"><Ico n="bold" :w="31" /></span>
              <span class="slot"><Ico n="italic" :w="30" /></span>
              <span class="slot"><Ico n="underline" :w="28" /></span>
              <span class="slot colour"><Ico n="color" /></span>
              <span class="slot mk"><Ico n="marker" :w="24" /></span>
              <i class="sep a1"></i>
              <span class="slot lk"><Ico n="link" :w="32" /></span>
              <span class="slot"><Ico n="addcomment" /></span>
              <span class="slot im"><Ico n="image" /></span>
              <Ico n="caret" class="c1" />
              <i class="sep a2"></i>
              <span class="slot on al"><Ico n="left" :w="21" /></span>
              <span class="slot"><Ico n="center" :w="21" /></span>
              <span class="slot"><Ico n="right" :w="21" /></span>
              <span class="slot"><Ico n="justify" :w="21" /></span>
              <i class="sep a3"></i>
              <span class="slot sp"><Ico n="spacing" :w="28" /></span>
              <i class="sep a4"></i>
              <span class="slot nl"><Ico n="numbered" :w="26" /></span><Ico n="caret" class="c2" />
              <span class="slot bl"><Ico n="bullets" :w="27" /></span><Ico n="caret" class="c3" />
            </div>
            <div class="tool-row second">
              <span class="slot"><Ico n="decrease" :w="28" /></span>
              <span class="slot"><Ico n="increase" :w="28" /></span>
              <i class="sep b1"></i>
              <span class="slot cl"><Ico n="clear" :w="28" /></span>
            </div>
          </div>
          <div class="gd-main">
            <div class="canvas">
              <div class="page-row">
                <div class="page">
                  <h1>Chapter 9 Summary</h1>
                  <h2>9.1 Linear Momentum</h2>
                  <p class="ind">The linear momentum of a particle or an object can be modeled as a particle</p>
                  <p>that is moving with a velocity, is defined as the product of the mass and velocity</p>
                  <p class="gap">can be shown by the following equation:</p>
                  <h2>9.2 Analysis Model: Isolated System (Momentum)</h2>
                  <p class="ind gap">If</p>
                  <h2>9.3 Analysis Model: Nonisolated System (Momentum)</h2>
                  <p class="ind last">The mass is</p>
                </div>
                <div class="gd-vscroll"><div></div></div>
              </div>
              <div class="gd-hscroll"><div></div></div>
              <div class="explore"><Ico n="explore" /></div>
            </div>
            <aside class="side"><Ico n="tasks" /><i></i><Ico n="thinplus" /><Ico n="chev" class="open" /></aside>
          </div>
        </div>
      </section>
    </div>

    <footer class="taskbar">
      <div class="start"><Ico n="windows" /></div>
      <div class="searchbox"><Ico n="find" /><span>Type here to search</span></div>
      <span class="cortana"><Ico n="cortana" /></span>
      <span class="taskview"><Ico n="taskview" /></span>
      <div class="apps">
        <span v-for="a in apps" :key="a.n" class="app" :class="{ run: a.run, focus: a.focus }"><Ico :n="a.n" /></span>
      </div>
      <div class="tray"><span v-for="t in tray" :key="t"><Ico :n="t" /></span></div>
      <div class="clock"><span>11:16 AM</span><span>11/1/2020</span></div>
      <div class="notice"><Ico n="notice" /></div>
      <i class="peek"></i>
    </footer>
  </div>
</template>

<style>
html, body { margin: 0; overflow: hidden; }
</style>

<style scoped>
* { box-sizing: border-box; }
p, h1, h2 { margin: 0; }
.desktop { width: 1920px; height: 1080px; display: flex; flex-direction: column; font-family: "Open Sans", "Noto Sans", sans-serif; overflow: hidden; background: #fff; }
.windows { display: flex; height: 1020px; }
.window { width: 960px; height: 1020px; border: 1px solid #1e1e20; border-top-color: #66676b; background: #fff; display: flex; flex-direction: column; overflow: hidden; position: relative; }
.window.docs { border-top-color: #97999d; border-right-color: #3a4326; }
.window.docs::before { content: ""; position: absolute; z-index: 9; left: 0; top: 0; bottom: 0; width: 20px; background: linear-gradient(90deg, #0000003a, #00000018 35%, #0000); }

/* browser chrome */
.tabstrip { height: 64px; background: #dee1e6; display: flex; align-items: flex-end; padding-left: 12px; position: relative; flex-shrink: 0; }
.docs .tabstrip { background: #e7eaed; }
.tab { width: 304px; height: 51px; padding-left: 16px; display: flex; align-items: center; color: #45484c; position: relative; }
.tab.active { width: 308px; padding-left: 18px; background: #fff; border-radius: 12px 12px 0 0; }
.tab.active::before, .tab.active::after { content: ""; position: absolute; bottom: 0; width: 12px; height: 12px; }
.tab.active::before { left: -12px; background: radial-gradient(circle at 0 0, #0000 11.5px, #fff 12px); }
.tab.active::after { right: -12px; background: radial-gradient(circle at 100% 0, #0000 11.5px, #fff 12px); }
.docs .tab.active { width: 360px; color: #6f7276; }
.tab-title { width: 210px; margin-left: 12px; font-size: 17px; letter-spacing: 0; line-height: 24px; padding-bottom: 1px; white-space: nowrap; overflow: hidden; -webkit-mask-image: linear-gradient(90deg, #000 86%, #0000); mask-image: linear-gradient(90deg, #000 86%, #0000); }
.docs .tab-title { width: 264px; letter-spacing: -.1px; }
.tab-x { margin-left: 12px; color: #3c4043; }
.tab:not(.active) .tab-x { margin-left: 10px; }
.docs .tab-x { color: #6a6d70; margin-left: 11px; }
.tab-sep { width: 2px; height: 30px; background: #8d9095; margin-bottom: 10px; }
.new-tab { margin: 0 0 17px 22px; color: #3c4043; }
.docs .new-tab { color: #6a6d70; margin-left: 24px; }
.controls { position: absolute; right: 26px; top: 15px; display: flex; gap: 54px; color: #000; }
.docs .controls { color: #85878a; }
.toolbar { height: 54px; display: flex; align-items: center; padding: 0 0 1px 21px; color: #5f6368; flex-shrink: 0; gap: 24px; }
.dim { color: #babcbe; }
.omnibox { width: 347px; height: 42px; margin-left: -3px; border-radius: 21px; background: #f1f3f4; display: flex; align-items: center; padding-left: 21px; }
.url { width: 256px; margin-left: 18px; font-size: 20px; letter-spacing: .05px; color: #6d7175; white-space: nowrap; }
.url b { font-weight: 400; color: #202124; }
.extensions { display: flex; margin-left: -15px; }
.extensions span { width: 48px; display: flex; justify-content: center; align-items: center; position: relative; }
.honey { color: #ff802b; }
.docs .honey { color: #bdbdbd; }
.extensions em { position: absolute; left: 27px; top: 19px; width: 18px; height: 18px; border-radius: 3px; background: #616161; color: #fff; font: 700 13px/18px "Open Sans"; text-align: center; }
.extensions em.green { background: #83c784; }
.avatar { width: 33px; height: 33px; border-radius: 50%; background: #0563c1; color: #fff; display: flex; align-items: center; justify-content: center; font: 700 24px Roboto, sans-serif; margin-right: 1px; }
.bookmarks { height: 49px; border-bottom: 1px solid #dadbdd; display: flex; align-items: flex-start; padding: 10px 0 0 23px; flex-shrink: 0; }
.bookmarks span { margin-left: 14px; font-size: 17px; line-height: 21px; letter-spacing: .1px; color: #3f4246; }

/* MindTap */
.mt { display: flex; flex: 1; min-height: 0; }
.rail { width: 90px; background: #262a2d; color: #e0e0e0; }
.rail-toggle { height: 68px; background: #17181c; display: flex; align-items: center; justify-content: center; padding-left: 4px; }
.rail-group { border-bottom: 1px solid #43484b; padding: 2px 5px 0 0; height: 66px; }
.rail-item { height: 63px; display: flex; align-items: center; justify-content: center; }
.rail-group:nth-child(2), .rail-group:nth-child(3) { height: 132px; }
.rail-group:nth-child(n+4) { padding-top: 0; }
.rail-item.user { padding-left: 2px; }
.rail-item.starfull { padding-right: 2px; }
.rail-item.cap { height: 58px; }
.rail-item.case { height: 60px; }
.rail-item.feedback { height: 64px; }
.mt-body { flex: 1; display: flex; flex-direction: column; }
.mt-head { height: 66px; border-bottom: 1px solid #d8d8d8; display: flex; align-items: center; padding-left: 23px; }
.brand { font-size: 22.5px; width: 119px; margin-left: 7px; color: #003865; letter-spacing: .4px; padding-bottom: 2px; }
.brand.product { width: 99px; margin-left: 12px; letter-spacing: .1px; }
.mt-head i { width: 1.5px; height: 33px; background: #003865; margin-left: -2px; }
.green-search { margin-left: 246px; color: #2f8400; }
.search-hint { font-size: 21px; margin-left: 15px; color: #757575; width: 207px; padding-top: 4px; }
.head-help { flex: 1; align-self: stretch; border-left: 1px solid #d8d8d8; display: flex; align-items: center; justify-content: center; color: #6f6f6f; padding-left: 3px; }
.mt-cols { flex: 1; display: flex; min-height: 0; }
.reader { width: 785px; border-right: 1px solid #d8d8d8; display: flex; flex-direction: column; }
.chapter { height: 60px; background: #f7f7f7; border-bottom: 1px solid #d8d8d8; display: flex; align-items: center; justify-content: space-between; padding: 0 18px 3px 23px; font-size: 22px; letter-spacing: .24px; color: #3f3f3f; }
.chapter svg { color: #6f6f6f; }
.reader-tools { height: 68px; border-bottom: 1px solid #d8d8d8; display: flex; align-items: center; padding: 2px 0 0 23px; color: #6f6f6f; flex-shrink: 0; }
.t-speak { margin-left: 371px; }
.t-size { margin-left: 38px; width: 41px; padding-top: 1px; font: 600 31px/30px "Open Sans"; white-space: nowrap; }
.t-size small { font-size: 21px; letter-spacing: 3px; }
.t-mark { margin-left: 42px; }
.t-print { margin-left: 48px; }
.t-help { margin-left: 42px; }
.reader-main { height: 590px; display: flex; position: relative; }
article { width: 759px; height: 590px; overflow: hidden; padding-left: 38px; color: #575757; font: 24px/48px "DejaVu Serif Condensed", "DejaVu Serif", serif; font-stretch: condensed; letter-spacing: .38px; white-space: nowrap; }
.intro { margin: -23px 0 0 60px; height: 164px; }
.definition { width: 684px; height: 411px; border: 15px solid #f1f1f1; padding: 9px 0 0 52px; }
.definition p { display: flex; height: 48px; }
cite { font-style: italic; }
.vec { width: 23px; margin-left: 9px; position: relative; text-align: center; font: 700 25px/48px "Liberation Serif", serif; display: block; height: 48px; letter-spacing: 0; }
.vec svg { position: absolute; left: 0; top: 7px; }
.m { font: italic 28px/49px "Liberation Serif", serif; width: 28px; letter-spacing: 0; }
.d0 { width: 272px; }
.d1, .d4 { margin-left: 8px; }
.d3 { width: 257px; }
.equation { display: flex; margin: 56px 0 0 214px; align-items: flex-start; }
.equation .equiv { margin: 20px 9px 0 9px; }
.equation .m { width: 20px; }
.equation .m + .vec { margin-left: 3px; }
.equation strong { margin: -9px 0 0 163px; font: 700 25px/48px "DejaVu Sans", sans-serif; letter-spacing: -.2px; color: #000; }
.vscroll { width: 25px; background: #f1f1f1; display: flex; flex-direction: column; align-items: center; }
.vthumb { width: 21px; height: 34px; background: #c1c1c1; margin-top: 254px; }
.tri { width: 0; height: 0; border: 6px solid #0000; }
.tri.up { border-width: 0 6px 6px; border-bottom-color: #505050; margin-top: 10px; }
.tri.down { border-width: 6px 6px 0; border-top-color: #505050; margin: auto 0 10px; }
.pager { position: absolute; top: 295px; width: 66px; height: 66px; background: #f7f7f7; display: flex; align-items: center; justify-content: center; color: #3c3c3c; }
.pager.prev { left: 0; border-radius: 0 5px 5px 0; }
.pager.next { right: 0; border-radius: 5px 0 0 5px; }
.hscroll { height: 25px; background: #f1f1f1; display: flex; align-items: center; border-bottom: 1px solid #dcdcdc; }
.tri.lt { border-width: 6px 6px 6px 0; border-right-color: #a3a3a3; margin-left: 9px; }
.tri.rt { border-width: 6px 0 6px 6px; border-left-color: #505050; margin-left: 16px; }
.hthumb { width: 703px; height: 20px; background: #c1c1c1; margin-left: 10px; }
.corner { width: 25px; height: 24px; background: #dcdcdc; margin-left: auto; }
.progress { flex: 1; padding: 18px 18px 0 18px; }
.track { height: 7px; border-radius: 4px; background: #dedede; box-shadow: inset 0 1px 2px #9999; }
.fill { width: 61px; height: 7px; border-radius: 4px; background: #006298; position: relative; }
.fill i { position: absolute; right: -8px; top: -5px; width: 17px; height: 17px; border-radius: 50%; background: #006298; }
.apps-rail { flex: 1; background: #565656; position: relative; display: flex; flex-direction: column; align-items: center; padding: 22px 0 0 3px; }
.apps-rail svg:nth-child(2) { margin-top: 35px; margin-right: 2px; }
.apps-rail svg:nth-child(3) { margin-top: 36px; margin-right: 3px; }
.apps-rail svg:nth-child(4) { margin-top: 34px; }
.apps-rail svg:nth-child(5) { margin-top: 37px; }

/* Google Docs */
.gd { flex: 1; display: flex; flex-direction: column; min-height: 0; position: relative; color: #5f6368; font-family: Roboto, sans-serif; }
.gd-head { height: 97px; border-bottom: 1px solid #dadce0; display: flex; flex-shrink: 0; }
.logo { margin: 21px 0 0 34px; }
.gd-title { width: 517px; overflow: hidden; padding-left: 33px; position: relative; white-space: nowrap; }
.gd-title::after { content: ""; position: absolute; right: 0; top: 0; bottom: 0; width: 8px; background: linear-gradient(90deg, #0000, #0002); }
.title-row { display: flex; align-items: center; height: 40px; margin-top: 13px; }
.name { width: 350px; padding-left: 1px; margin-right: 1px; font: 25px/34px Inter, sans-serif; color: #000; letter-spacing: .08px; }
.title-row svg:nth-of-type(2) { margin-left: 17px; }
.title-row svg:nth-of-type(3) { margin-left: 20px; }
.menus { display: flex; gap: 22.5px; font-size: 20px; line-height: 30px; letter-spacing: .45px; color: #202124; margin-top: 5px; }
.gd-actions { flex: 1; display: flex; align-items: center; padding-left: 64px; }
.share { width: 132px; height: 54px; margin-left: 28px; border: 0; border-radius: 6px; background: #1a73e8; color: #fff; display: flex; align-items: center; gap: 12px; padding: 0 0 2px 20px; font: 600 19.5px Inter, sans-serif; }
.avatar.big { width: 48px; height: 48px; margin-left: 30px; font-size: 36px; }
.gd-tools { height: 58px; display: flex; align-items: center; padding-left: 33px; font-size: 18px; flex-shrink: 0; color: #5f6368; }
.gd-tools span { color: #4c4f53; white-space: nowrap; }
.gd-tools .slot { color: #5f6368; }
.slot { width: 42px; height: 39px; display: flex; align-items: center; justify-content: center; flex-shrink: 0; }
.slot.on, .gd-tools .slot.on { width: 39px; background: #e8f0fe; color: #1a73e8; border-radius: 4px; }
.sep { width: 1px; height: 30px; background: #dadce0; flex-shrink: 0; }
.s1 { margin-left: 6px; }
.zoom { width: 62px; margin-left: 24px; }
.s2 { margin-left: 12px; }
.style { width: 120px; margin-left: 24px; font-weight: 500; }
.s3 { margin-left: 14px; }
.font { width: 120px; margin-left: 24px; font-weight: 500; }
.dots3 { margin-left: 10px; }
.pencil { margin-left: 110px; }
.side-top { width: 82px; align-self: stretch; margin-left: auto; border-left: 1px solid #dadce0; padding: 31px 0 0 30px; }
.gd-more { height: 114px; background: #fff; border-radius: 6px; box-shadow: 0 2px 10px #00000038; position: relative; z-index: 2; padding-top: 8px; flex-shrink: 0; }
.tool-row { display: flex; align-items: center; height: 39px; padding-left: 14px; }
.size { width: 133px; height: 36px; border: 1px solid #dadce0; border-radius: 3px; display: grid; grid-template-columns: 35px 1fr 36px; }
.size span { display: flex; align-items: center; justify-content: center; }
.size .num { border: solid #dadce0; border-width: 0 1px; font-size: 18px; padding-top: 3px; color: #4c4f53; }
.f { margin-left: 7px; }
.colour { margin-left: 2px; }
.mk { margin-left: 3px; padding-bottom: 5px; }
.a1 { margin-left: 7px; }
.lk { margin-left: 7px; }
.im { margin-left: -2px; }
.a2 { margin-left: 14px; }
.al { margin: 0 1px 0 7px; }
.a3 { margin-left: 6px; }
.sp { margin-left: 9px; }
.a4 { margin-left: 8px; }
.nl { margin-left: 8px; }
.c2 { margin-left: 5px; }
.bl { margin-left: 10px; }
.c3 { margin-left: 5px; }
.second { margin-top: 18px; padding-left: 6px; }
.b1 { margin-left: 6px; }
.cl { margin-left: 8px; }
.gd-main { flex: 1; display: flex; min-height: 0; }
.canvas { width: 875px; display: flex; flex-direction: column; position: relative; }
.page-row { height: 559px; display: flex; }
.page { width: 851px; overflow: hidden; padding: 20px 0 0 90px; font: 24px/57.2px "Liberation Serif", serif; color: #000; white-space: nowrap; }
.page h1 { width: 936px; text-align: center; font-size: 24px; padding-right: 2px; }
.page h2 { font-size: 24px; text-decoration: underline; letter-spacing: .03px; }
.ind { padding-left: 72px; }
.gap { margin-bottom: 20px; }
.last { padding-top: 18px; }
.gd-vscroll { flex: 1; background: #f8f9fa; padding-left: 6px; }
.gd-vscroll div { width: 12px; height: 125px; background: #dadce0; border-radius: 0 0 6px 6px; }
.gd-hscroll { flex: 1; background: #f8f9fa; padding: 6px 0 0 121px; }
.gd-hscroll div { width: 504px; height: 12px; border-radius: 6px; background: #dadce0; }
.explore { position: absolute; left: 794px; bottom: 10px; width: 56px; height: 56px; background: #fafafa; border: 1px solid #d4d4d4; border-radius: 4px; box-shadow: 0 1px 3px #0003; display: flex; align-items: center; justify-content: center; color: #6f6f6f; }
.side { flex: 1; border-left: 1px solid #dadce0; display: flex; flex-direction: column; align-items: center; padding: 25px 0 34px 4px; }
.side i { width: 29px; height: 1px; background: #dadce0; margin: 52px 0 57px; }
.side .open { margin-top: auto; margin-right: 4px; }

/* taskbar */
.taskbar { height: 60px; background: linear-gradient(90deg, #d9d9da, #dcdad7 30%, #d9d9d7 60%, #dbd9d6 75%, #d9d9d9); display: flex; align-items: center; flex-shrink: 0; color: #000; }
.start { width: 73px; padding-left: 24px; }
.searchbox { width: 514px; height: 57px; background: #fff; border: 1px solid #c6c6c6; display: flex; align-items: center; padding-left: 17px; }
.searchbox span { margin-left: 17px; padding-top: 2px; font-size: 21px; letter-spacing: .3px; color: #222; }
.cortana { margin-left: 25px; }
.taskview { margin-left: 47px; width: 26px; }
.apps { display: flex; height: 60px; margin-left: 27px; }
.app { width: 66.9px; height: 60px; display: flex; align-items: center; justify-content: center; position: relative; }
.app.run::after { content: ""; position: absolute; left: 7px; right: 7px; bottom: 0; height: 3px; background: #0078d7; }
.app.focus::before { content: ""; position: absolute; left: 2px; right: -1px; top: 0; bottom: 0; background: linear-gradient(90deg, #f0f0f0 58px, #c4c4c4 58px 60px, #e4e4e4 60px); }
.app.focus::after { left: 2px; right: -1px; }
.app svg { position: relative; }
.app.focus svg { left: -2px; }
.tray { display: flex; margin-left: 2px; }
.tray span { width: 48px; display: flex; align-items: center; justify-content: center; }
.tray span:last-child { margin-left: 6px; }
.clock { width: 100px; margin-left: 9px; display: flex; flex-direction: column; align-items: center; font-size: 17.5px; line-height: 28px; white-space: nowrap; }
.notice { margin-left: 19px; padding-top: 15px; width: 38px; }
.peek { width: 2px; height: 60px; background: #a9a9a9; margin-left: auto; margin-right: 6px; }
</style>
